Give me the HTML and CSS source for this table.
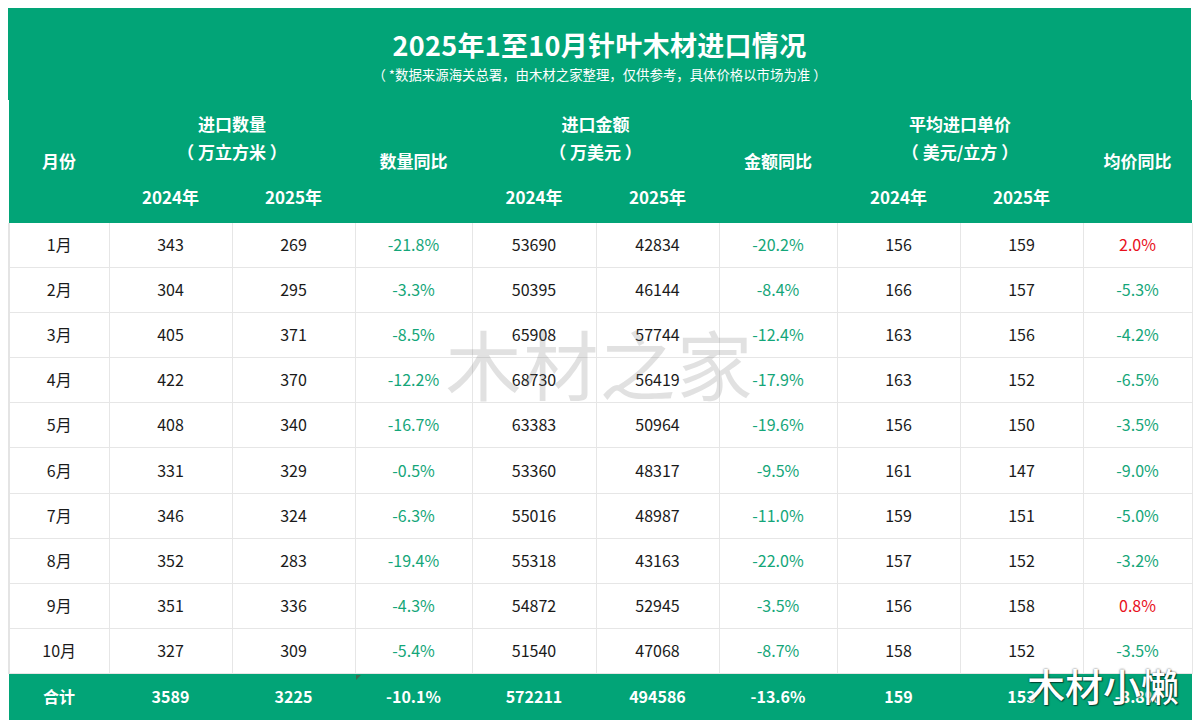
FILE: index.html
```html
<!DOCTYPE html>
<html lang="zh">
<head>
<meta charset="utf-8">
<title>2025年1至10月针叶木材进口情况</title>
<link rel="stylesheet" href="styles.css">
</head>
<body>
<div class="sheet">
  <div class="banner">
    <h1 class="title">2025年1至10月针叶木材进口情况</h1>
    <p class="note">（ *数据来源海关总署，由木材之家整理，仅供参考，具体价格以市场为准 ）</p>
  </div>
  <table class="data">
    <colgroup>
      <col class="c-m"><col class="c-n"><col class="c-n"><col class="c-p">
      <col class="c-n2"><col class="c-n"><col class="c-p2"><col class="c-n"><col class="c-n"><col class="c-l">
    </colgroup>
    <thead>
      <tr class="h1">
        <th rowspan="2">月份</th>
        <th colspan="2">进口数量<br>（ 万立方米 ）</th>
        <th rowspan="2">数量同比</th>
        <th colspan="2">进口金额<br>（ 万美元 ）</th>
        <th rowspan="2">金额同比</th>
        <th colspan="2">平均进口单价<br>（ 美元/立方 ）</th>
        <th rowspan="2">均价同比</th>
      </tr>
      <tr class="h2">
        <th>2024年</th><th>2025年</th>
        <th>2024年</th><th>2025年</th>
        <th>2024年</th><th>2025年</th>
      </tr>
    </thead>
    <tbody>
      <tr><td>1月</td><td>343</td><td>269</td><td class="dn">-21.8%</td><td>53690</td><td>42834</td><td class="dn">-20.2%</td><td>156</td><td>159</td><td class="up">2.0%</td></tr>
      <tr><td>2月</td><td>304</td><td>295</td><td class="dn">-3.3%</td><td>50395</td><td>46144</td><td class="dn">-8.4%</td><td>166</td><td>157</td><td class="dn">-5.3%</td></tr>
      <tr><td>3月</td><td>405</td><td>371</td><td class="dn">-8.5%</td><td>65908</td><td>57744</td><td class="dn">-12.4%</td><td>163</td><td>156</td><td class="dn">-4.2%</td></tr>
      <tr><td>4月</td><td>422</td><td>370</td><td class="dn">-12.2%</td><td>68730</td><td>56419</td><td class="dn">-17.9%</td><td>163</td><td>152</td><td class="dn">-6.5%</td></tr>
      <tr><td>5月</td><td>408</td><td>340</td><td class="dn">-16.7%</td><td>63383</td><td>50964</td><td class="dn">-19.6%</td><td>156</td><td>150</td><td class="dn">-3.5%</td></tr>
      <tr><td>6月</td><td>331</td><td>329</td><td class="dn">-0.5%</td><td>53360</td><td>48317</td><td class="dn">-9.5%</td><td>161</td><td>147</td><td class="dn">-9.0%</td></tr>
      <tr><td>7月</td><td>346</td><td>324</td><td class="dn">-6.3%</td><td>55016</td><td>48987</td><td class="dn">-11.0%</td><td>159</td><td>151</td><td class="dn">-5.0%</td></tr>
      <tr><td>8月</td><td>352</td><td>283</td><td class="dn">-19.4%</td><td>55318</td><td>43163</td><td class="dn">-22.0%</td><td>157</td><td>152</td><td class="dn">-3.2%</td></tr>
      <tr><td>9月</td><td>351</td><td>336</td><td class="dn">-4.3%</td><td>54872</td><td>52945</td><td class="dn">-3.5%</td><td>156</td><td>158</td><td class="up">0.8%</td></tr>
      <tr><td>10月</td><td>327</td><td>309</td><td class="dn">-5.4%</td><td>51540</td><td>47068</td><td class="dn">-8.7%</td><td>158</td><td>152</td><td class="dn">-3.5%</td></tr>
    </tbody>
    <tfoot>
      <tr><td>合计</td><td>3589</td><td>3225</td><td class="marked">-10.1%</td><td>572211</td><td>494586</td><td>-13.6%</td><td>159</td><td>153</td><td>-3.8%</td></tr>
    </tfoot>
  </table>
  <div class="wm-center">木材之家</div>
  <div class="wm-corner">木材小懒</div>
</div>
</body>
</html>
```

FILE: styles.css
```css
html, body {
  margin: 0;
  padding: 0;
  background: #ffffff;
}
body {
  font-family: "Noto Sans CJK SC", "Noto Sans", sans-serif;
  color: #1a1a1a;
}
.sheet {
  position: relative;
  width: 1183px;
  margin: 8px 0 0 8px;
}
.banner {
  background: #02a477;
  color: #ffffff;
  text-align: center;
  height: 92px;
  box-sizing: border-box;
  padding-top: 22px;
}
.title {
  margin: 0;
  font-size: 27px;
  font-weight: 700;
  line-height: 30px;
  letter-spacing: 0.3px;
}
.note {
  margin: 5px 0 0;
  font-size: 13.4px;
  line-height: 18px;
}
.data {
  width: 1183px;
  border-collapse: collapse;
  table-layout: fixed;
}
.c-m { width: 100px; }
.c-n { width: 123px; }
.c-p { width: 117px; }
.c-n2 { width: 124px; }
.c-p2 { width: 118px; }
.c-l { width: 109px; }
thead th {
  background: #02a477;
  color: #ffffff;
  font-weight: 700;
  font-size: 17px;
  padding: 0;
  text-align: center;
  vertical-align: middle;
}
.h1 th {
  height: 76px;
  line-height: 28px;
  padding-bottom: 2px;
}
.h2 th {
  height: 45px;
  padding-bottom: 9px;
  box-sizing: border-box;
}
tbody td {
  height: 42.1px;
  padding: 0 0 2px;
  text-align: center;
  vertical-align: middle;
  font-size: 16px;
  border: 1px solid #e6e6e6;
}
tbody tr:first-child td {
  border-top: none;
}
tbody td:first-child {
  border-left: 2px solid #e4e4e4;
}
.dn {
  color: #14a679;
}
.up {
  color: #e8101c;
}
tfoot td {
  background: #02a477;
  color: #ffffff;
  font-weight: 700;
  font-size: 16px;
  height: 44px;
  padding: 0 0 2px;
  text-align: center;
  vertical-align: middle;
}
.marked {
  position: relative;
}
.marked::before {
  content: "";
  position: absolute;
  left: 1px;
  top: 1px;
  border-style: solid;
  border-width: 5px 5px 0 0;
  border-color: #3b6b4f transparent transparent transparent;
}
.wm-center {
  position: absolute;
  left: 0;
  right: 0;
  top: 309px;
  text-align: center;
  font-size: 76px;
  line-height: 90px;
  letter-spacing: 1px;
  color: rgba(120, 120, 120, 0.22);
  pointer-events: none;
}
.wm-corner {
  position: absolute;
  left: 1019px;
  top: 654px;
  white-space: nowrap;
  font-size: 38px;
  line-height: 46px;
  font-weight: 500;
  color: #ffffff;
  text-shadow: 0 0 2px rgba(0, 0, 0, 0.7), 1px 1px 1px rgba(0, 0, 0, 0.5);
  pointer-events: none;
}
```
